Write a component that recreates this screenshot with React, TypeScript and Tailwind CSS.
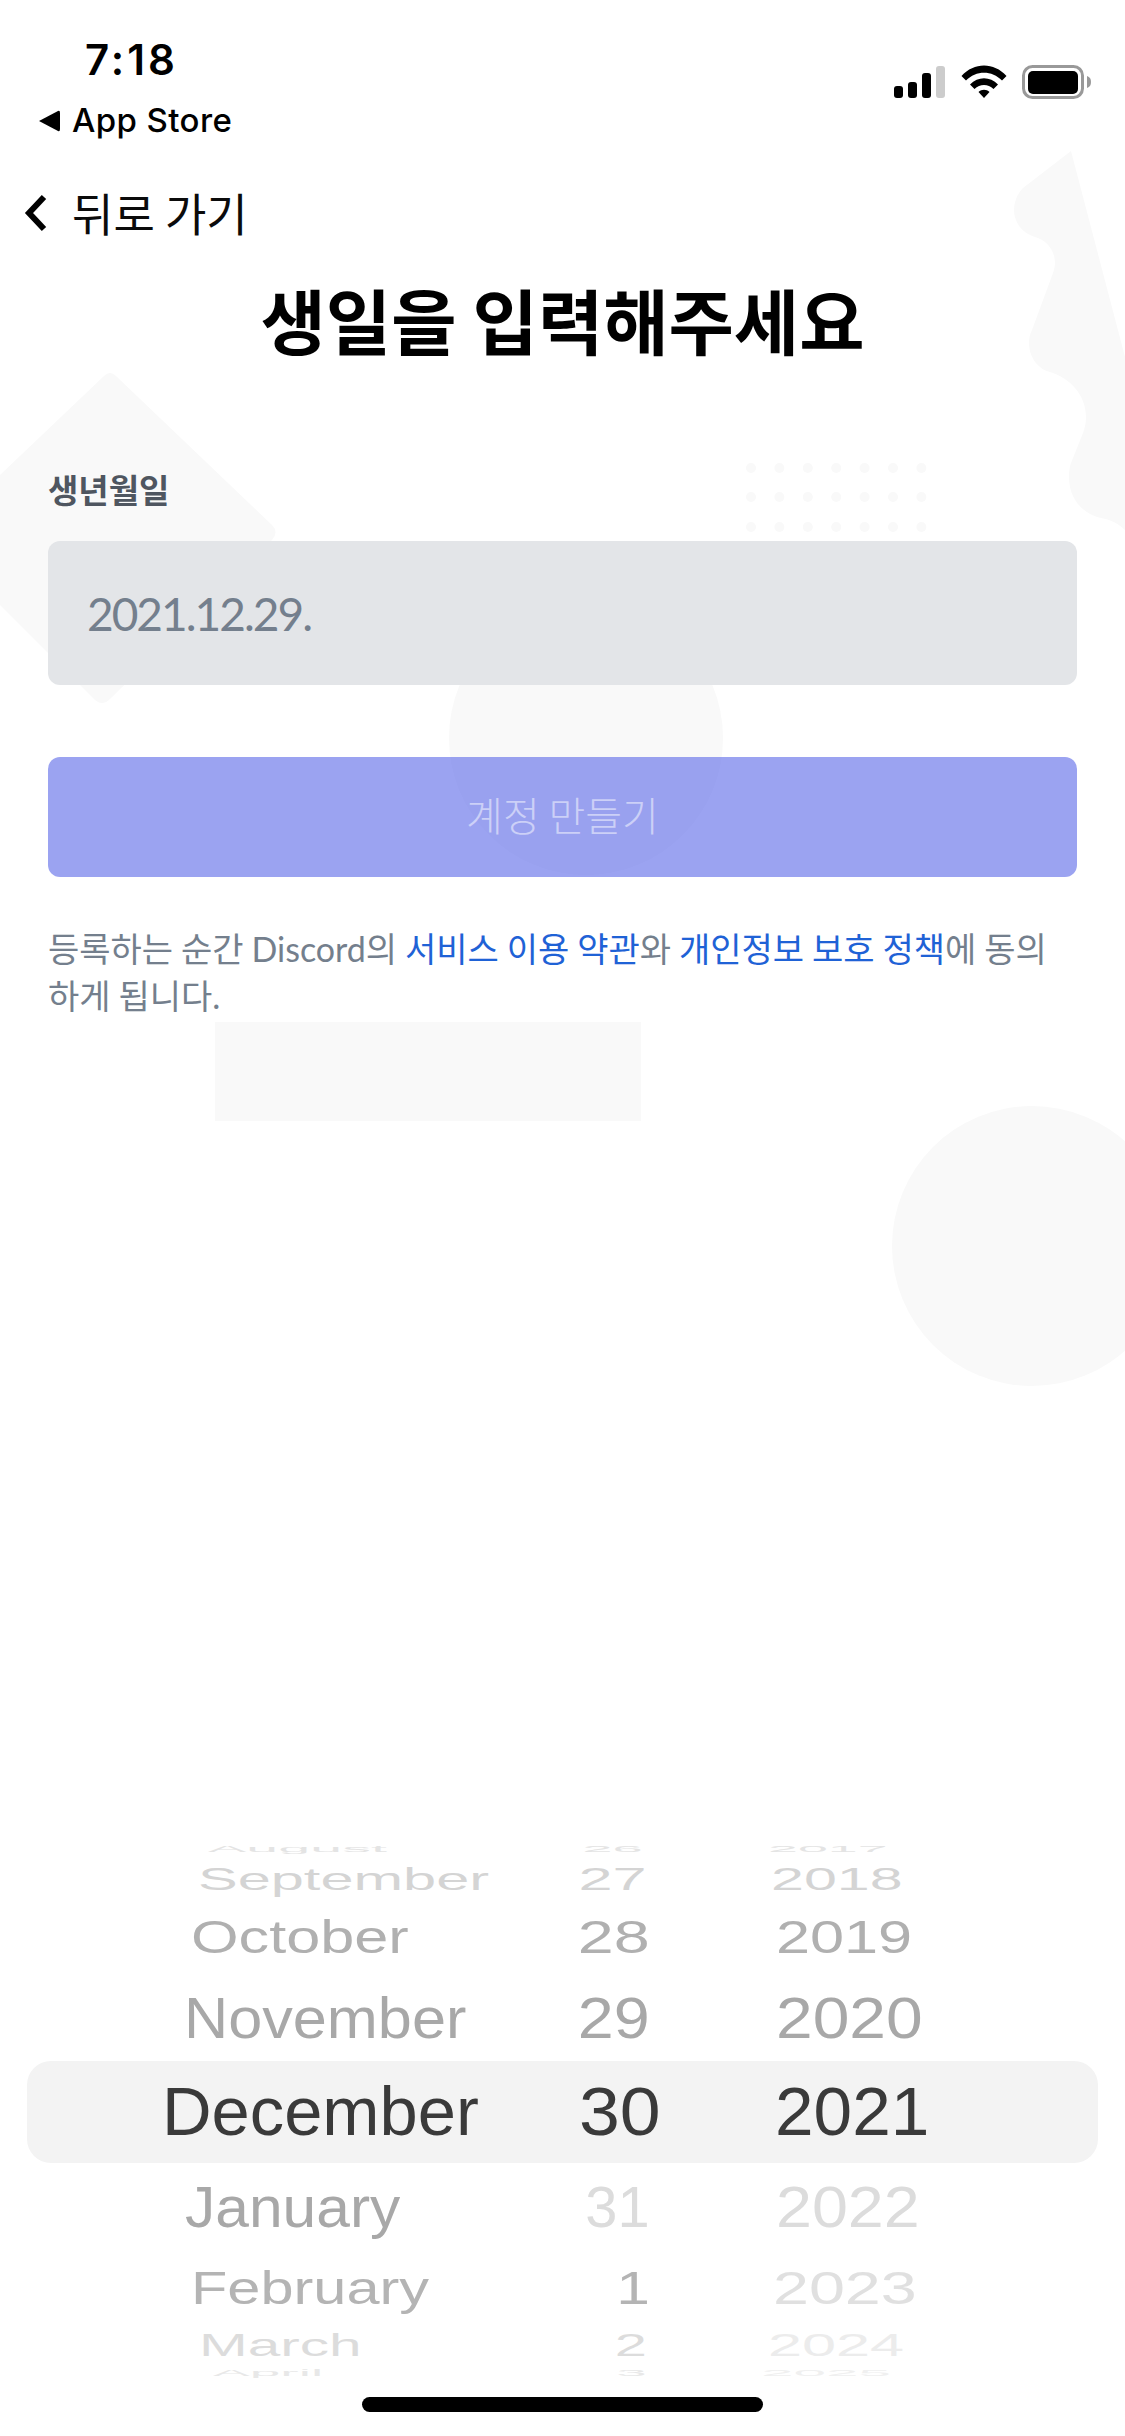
import { Fragment } from "react";

interface Cell {
  text: string;
  x: number; // left edge of the text, or right edge for days
  sx: number;
  color: string;
}

interface PickerRow {
  h: number;
  sy: number;
  month: Cell;
  day: Cell;
  year: Cell;
}

const ROWS: PickerRow[] = [
  { h: 14, sy: 0.14, month: { text: "August", x: 208, sx: 0.845, color: "#e4e4e4" }, day: { text: "26", x: 643, sx: 0.8, color: "#e4e4e4" }, year: { text: "2017", x: 768, sx: 0.79, color: "#e4e4e4" } },
  { h: 46, sy: 0.47, month: { text: "September", x: 198, sx: 0.875, color: "#d4d4d4" }, day: { text: "27", x: 647, sx: 0.9, color: "#d4d4d4" }, year: { text: "2018", x: 771, sx: 0.87, color: "#d4d4d4" } },
  { h: 70, sy: 0.68, month: { text: "October", x: 191, sx: 0.9, color: "#b0b0b0" }, day: { text: "28", x: 650, sx: 0.95, color: "#b0b0b0" }, year: { text: "2019", x: 776, sx: 0.9, color: "#b0b0b0" } },
  { h: 92, sy: 0.85, month: { text: "November", x: 184, sx: 0.9, color: "#a8a8a8" }, day: { text: "29", x: 650, sx: 0.95, color: "#a8a8a8" }, year: { text: "2020", x: 776, sx: 0.97, color: "#a8a8a8" } },
  { h: 94, sy: 1, month: { text: "December", x: 162, sx: 1.01, color: "#3a3a3a" }, day: { text: "30", x: 661, sx: 1.08, color: "#3a3a3a" }, year: { text: "2021", x: 775, sx: 1.02, color: "#3a3a3a" } },
  { h: 98, sy: 0.85, month: { text: "January", x: 185, sx: 0.89, color: "#a8a8a8" }, day: { text: "31", x: 650, sx: 0.85, color: "#dcdcdc" }, year: { text: "2022", x: 776, sx: 0.95, color: "#dcdcdc" } },
  { h: 64, sy: 0.68, month: { text: "February", x: 191, sx: 0.875, color: "#b4b4b4" }, day: { text: "1", x: 650, sx: 0.89, color: "#b4b4b4" }, year: { text: "2023", x: 773, sx: 0.95, color: "#e0e0e0" } },
  { h: 50, sy: 0.47, month: { text: "March", x: 199, sx: 0.86, color: "#dcdcdc" }, day: { text: "2", x: 647, sx: 0.85, color: "#dcdcdc" }, year: { text: "2024", x: 768, sx: 0.9, color: "#ececec" } },
  { h: 6, sy: 0.14, month: { text: "April", x: 213, sx: 0.81, color: "#e8e8e8" }, day: { text: "3", x: 647, sx: 0.8, color: "#e8e8e8" }, year: { text: "2025", x: 761, sx: 0.86, color: "#f0f0f0" } },
];

function Background() {
  const dots: number[][] = [];
  for (const y of [468, 497, 527]) {
    for (let c = 0; c < 7; c++) dots.push([751 + c * 28.4, y]);
  }
  return (
    <svg className="absolute inset-0" width="1125" height="2436" viewBox="0 0 1125 2436" fill="#f9f9f9">
      <path d="M0 475 L104 376 Q110 370 116 376 L272 525 Q279 532 272 540 L110 699 Q102 707 94 699 L0 605 Z" />
      <path d="M1071 151 L1125 357 L1125 530 C1115 520 1105 519 1097 517 C1080 511 1069 497 1069 477 C1069 470 1070 466 1071 463 L1083 433 C1085 428 1086 422 1086 417 C1086 395 1070 378 1050 372 C1038 369 1029 357 1029 343 C1029 338 1030 334 1032 330 L1053 273 C1054 270 1055 266 1055 263 C1055 251 1047 240 1035 237 C1022 233 1014 222 1014 210 C1014 201 1018 193 1023 188 Z" />
      {dots.map(([x, y], i) => (
        <circle key={i} cx={x} cy={y} r="5" />
      ))}
      <circle cx="586" cy="738" r="137" />
      <rect x="215" y="1022" width="426" height="99" />
      <circle cx="1032" cy="1246" r="140" />
    </svg>
  );
}

function StatusIcons() {
  return (
    <div className="flex items-start pt-[65px] pr-[34px]">
      <svg width="52" height="33" viewBox="0 0 52 33" className="mr-[16px]">
        <rect x="1" y="21" width="9" height="12" rx="3" fill="#000" />
        <rect x="15" y="17" width="9" height="16" rx="3" fill="#000" />
        <rect x="29" y="8" width="9" height="25" rx="3" fill="#000" />
        <rect x="43" y="1" width="9" height="32" rx="3" fill="#ccc" />
      </svg>
      <svg width="46" height="33" viewBox="0 0 46 33" className="mr-[15px]">
        <path d="M0.5 11 C13 -3 33 -3 45.5 11 L41 15.5 C31 5 15 5 5 15.5 Z" fill="#000" />
        <path d="M9 19.5 C17 11 29 11 37 19.5 L32.5 24 C27 18.5 19 18.5 13.5 24 Z" fill="#000" />
        <path d="M17.5 27 C20.5 24 25.5 24 28.5 27 L23 33 Z" fill="#000" />
      </svg>
      <svg width="69" height="34" viewBox="0 0 69 34">
        <rect x="1.5" y="1.5" width="59" height="31" rx="9" fill="none" stroke="#999" strokeWidth="3" />
        <rect x="6" y="6" width="50" height="23" rx="5" fill="#000" />
        <path d="M65 11 C68 12 69 14 69 17 C69 20 68 22 65 23 Z" fill="#999" />
      </svg>
    </div>
  );
}

function DatePicker() {
  return (
    <div className="relative mt-auto mb-[60px] font-['Liberation_Sans',sans-serif] text-[68px] leading-none">
      {/* selection band sits behind the wheel */}
      <div className="absolute left-[27px] top-[219px] w-[1071px] h-[102px] rounded-[24px] bg-[#f3f3f3]" />
      <div className="relative flex flex-col">
        {ROWS.map((row) => (
          <Fragment key={row.month.text}>
            <div className="flex items-center whitespace-nowrap" style={{ height: row.h }}>
              <div className="w-[560px] shrink-0" style={{ paddingLeft: row.month.x }}>
                <span
                  className="inline-block origin-left"
                  style={{ color: row.month.color, transform: `scale(${row.month.sx}, ${row.sy})` }}
                >
                  {row.month.text}
                </span>
              </div>
              <div className="w-[100px] shrink-0 text-right">
                <span
                  className="inline-block origin-right"
                  style={{ color: row.day.color, transform: `translateX(${row.day.x - 660}px) scale(${row.day.sx}, ${row.sy})` }}
                >
                  {row.day.text}
                </span>
              </div>
              <div className="flex-1" style={{ paddingLeft: row.year.x - 660 }}>
                <span
                  className="inline-block origin-left"
                  style={{ color: row.year.color, transform: `scale(${row.year.sx}, ${row.sy})` }}
                >
                  {row.year.text}
                </span>
              </div>
            </div>
          </Fragment>
        ))}
      </div>
    </div>
  );
}

export default function App() {
  return (
    <div className="relative w-[1125px] h-[2436px] overflow-hidden bg-white">
      <Background />
      <div className="relative flex flex-col h-full font-['Lato','Noto_Sans_CJK_KR',sans-serif]">
        {/* Status bar */}
        <div className="flex justify-between h-[150px] font-['Inter',sans-serif] text-black">
          <div className="pt-[35px]">
            <div className="ml-[85px] h-[50px] leading-[50px] text-[42px] font-semibold tracking-[3px]">7:18</div>
            <div className="flex items-center mt-[15px] h-[42px] ml-[38px]">
              <svg width="22" height="22" viewBox="0 0 22 22" className="mr-[12px]">
                <path d="M1 11 L20 1 Q22 0 22 3 L22 19 Q22 22 20 21 Z" fill="#000" />
              </svg>
              <span className="text-[33px] font-medium tracking-[0.4px]">App Store</span>
            </div>
          </div>
          <StatusIcons />
        </div>

        {/* Back */}
        <div className="flex items-center h-[60px] mt-[33px] ml-[24px] font-['Noto_Sans_CJK_KR',sans-serif] text-[45px] text-[#0b0b0b]">
          <svg width="24" height="38" viewBox="0 0 24 38" className="mr-[24px]">
            <path d="M20 3 L5 19 L20 35" fill="none" stroke="#000" strokeWidth="6" />
          </svg>
          <span>뒤로 가기</span>
        </div>

        {/* Title */}
        <h1 className="mt-[30px] h-[90px] leading-[90px] text-center font-['Noto_Sans_CJK_KR',sans-serif] font-bold text-[71px] text-black">
          생일을 입력해주세요
        </h1>

        {/* Form */}
        <div className="px-[48px]">
          <div className="mt-[106px] h-[40px] leading-[40px] font-['Noto_Sans_CJK_KR',sans-serif] font-bold text-[33px] text-[#4f5660]">
            생년월일
          </div>
          <div className="mt-[32px] h-[144px] flex items-center pl-[39px] rounded-[12px] bg-[#e3e5e8] text-[46px] text-[#747f8d] tracking-[-2px]">
            2021.12.29.
          </div>
          <div className="mt-[72px] h-[120px] flex items-center justify-center pb-[6px] rounded-[12px] bg-[#5865e8]/60 font-['Noto_Sans_CJK_KR',sans-serif] text-[40px] font-light text-white/50">
            계정 만들기
          </div>
          <p className="mt-[48px] text-[34px] leading-[47px] text-[#747f8d] [word-spacing:-0.8px]">
            등록하는 순간 Discord의 <span className="text-[#1f62d6]">서비스 이용 약관</span>와{" "}
            <span className="text-[#1f62d6]">개인정보 보호 정책</span>에 동의
            <br />
            하게 됩니다.
          </p>
        </div>

        <DatePicker />

        {/* Home indicator */}
        <div className="absolute left-[362px] top-[2397px] w-[401px] h-[15px] rounded-full bg-black" />
      </div>
    </div>
  );
}
